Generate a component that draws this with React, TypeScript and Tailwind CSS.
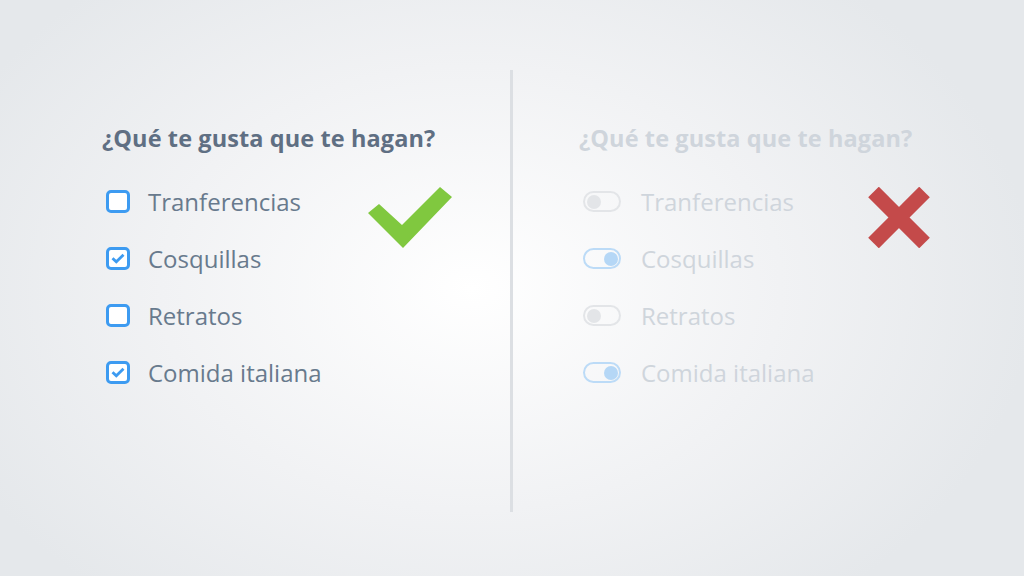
import React from 'react';

const items = [
  { label: 'Tranferencias', on: false },
  { label: 'Cosquillas', on: true },
  { label: 'Retratos', on: false },
  { label: 'Comida italiana', on: true },
];

const font = { fontFamily: '"Open Sans", "Liberation Sans", sans-serif' };

const Checkbox: React.FC<{ checked: boolean }> = ({ checked }) => (
  <div className="w-[24px] h-[23px] rounded-[5px] border-[3px] border-[#3d9bf1] bg-white flex items-center justify-center shrink-0">
    {checked && (
      <svg width="14" height="11" viewBox="0 0 14 11">
        <polyline points="1.5,5.2 5.3,8.8 12.5,1.8" fill="none" stroke="#3d9bf1" strokeWidth="2.8" />
      </svg>
    )}
  </div>
);

const Toggle: React.FC<{ on: boolean }> = ({ on }) => (
  <div
    className={`w-[38px] h-[21px] rounded-full border-[2.5px] flex items-center px-[1.5px] shrink-0 ${
      on ? 'border-[#bcdbf7] justify-end' : 'border-[#e3e5e8] justify-start'
    }`}
  >
    <div className={`w-[14px] h-[14px] rounded-full ${on ? 'bg-[#b5d7f6]' : 'bg-[#e3e5e8]'}`} />
  </div>
);

export default function App() {
  return (
    <div
      className="w-full h-screen overflow-hidden flex bg-[radial-gradient(ellipse_55%_70%_at_46%_50%,_#ffffff_0%,_#f1f2f4_55%,_#e5e8eb_100%)] pl-[102px] pt-[70px]"
      style={font}
    >
      {/* good */}
      <div className="relative w-[408px]">
        <h2 className="mt-[52px] text-[23.5px] leading-[32px] font-bold text-[#5f6f83] tracking-[0.1px]">
          ¿Qué te gusta que te hagan?
        </h2>
        <ul className="mt-[19px] pl-[4px]">
          {items.map((it) => (
            <li key={it.label} className="h-[57px] flex items-center gap-[18px]">
              <Checkbox checked={it.on} />
              <span className="text-[24px] text-[#687a8d]">{it.label}</span>
            </li>
          ))}
        </ul>
        <svg className="absolute left-[266px] top-[117px]" width="84" height="62" viewBox="0 0 84 62">
          <polygon points="0,26 11,17 34,38 72,0 84,10 35,61" fill="#80c83f" />
        </svg>
      </div>

      <div className="w-[3px] h-[442px] bg-[#dcdfe3]" />

      {/* bad */}
      <div className="relative pl-[66px] w-[440px]">
        <h2 className="mt-[52px] text-[23.5px] leading-[32px] font-bold text-[#cfd5dc] tracking-[0.1px]">
          ¿Qué te gusta que te hagan?
        </h2>
        <ul className="mt-[19px] pl-[4px]">
          {items.map((it) => (
            <li key={it.label} className="h-[57px] flex items-center gap-[20px]">
              <Toggle on={it.on} />
              <span className="text-[24px] text-[#cfd5dc]">{it.label}</span>
            </li>
          ))}
        </ul>
        <svg className="absolute left-[354px] top-[117px]" width="64" height="61" viewBox="0 0 64 61">
          <line x1="6.5" y1="5" x2="57.5" y2="56" stroke="#c44a4a" strokeWidth="15" />
          <line x1="57.5" y1="5" x2="6.5" y2="56" stroke="#c44a4a" strokeWidth="15" />
        </svg>
      </div>
    </div>
  );
}
